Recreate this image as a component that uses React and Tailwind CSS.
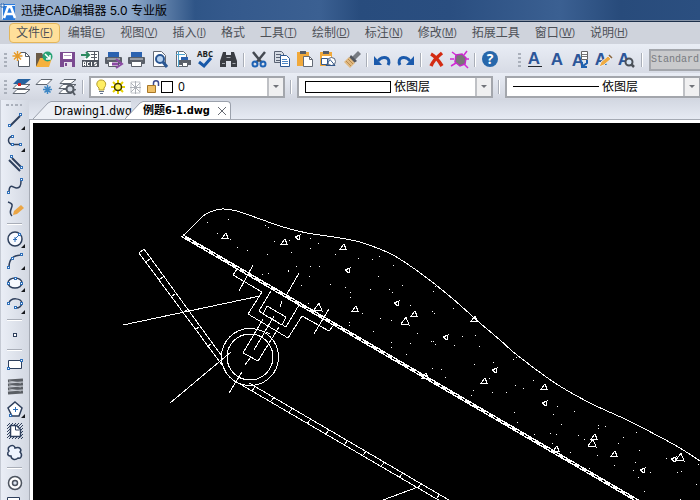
import React from "react";

const INK = "#2e3f5c";

function Icon({ children, h = 24 }) {
  return (
    <svg width="23" height={h} viewBox={`0 0 23 ${h}`} fill="none" aria-hidden="true" className="overflow-visible">
      {children}
    </svg>
  );
}

function Printer() {
  return (
    <>
      <rect x="6" y="4" width="11" height="6" fill="#2b62b0" />
      <rect x="3" y="9" width="17" height="7" rx="1" fill="#5b6069" />
      <path d="M5 11h13" stroke="#d9dce2" />
      <path d="M6.500 13.500h10v5h-10z" fill="#fff" stroke="#5b6069" />
    </>
  );
}

function LetterA({ x = 11, y = 17 }) {
  return (
    <text x={x} y={y} fontSize="17" fontWeight="700" textAnchor="middle" fill="#2c5699" fontFamily="Liberation Sans, sans-serif">A</text>
  );
}

function Layers() {
  return (
    <>
      <path d="M7 14.500h13l-5 4H3z" fill="#fff" stroke="#5f6670" />
      <path d="M7 9.500h13l-5 4H3z" fill="#fff" stroke="#5f6670" />
    </>
  );
}

const toolbarMain = [
  ["新建", <>
    <path d="M8.500 4.500h7l4 4v10h-11z" fill="#fff" stroke="#555c66" />
    <path d="M15.500 4.500v4h4" stroke="#555c66" />
    <circle cx="7.500" cy="8" r="4.500" fill="#eef1f7" />
    <path d="M7.500 3v10M2.500 8h10M4 4.500l7 7M11 4.500l-7 7" stroke="#e59a2a" strokeWidth="1.500" />
  </>],
  ["打开", <>
    <path d="M3 5h6l1 2h6v11H3z" fill="#6b5b47" />
    <path d="M7 10h12l-3 9H3z" fill="#f5b13d" />
    <circle cx="14.500" cy="8.500" r="5" fill="#27a376" />
    <path d="M12 6l4.500 4.500M17 7v4h-4" stroke="#fff" strokeWidth="1.500" />
  </>],
  ["保存", <>
    <path d="M4 4h15v15H4z" fill="#7b4a91" />
    <path d="M7 5h9v6H7z" fill="#fff" />
    <path d="M8 14h8v5H8z" fill="#e7e0ed" />
    <path d="M9 15h2v3H9z" fill="#7b4a91" />
    <path d="M8 7.500h7" stroke="#b8a0c4" />
  </>],
  ["ACIS", <>
    <path d="M8 3.500h11.500v9H5" stroke="#565c66" fill="#fff" />
    <path d="M12 6.500h6M12 9.500h6M15.500 4v8" stroke="#565c66" />
    <path d="M2 7h7M7 4l3 3-3 3" stroke="#2d8a61" strokeWidth="2" />
    <rect x="3" y="12" width="17" height="7" fill="#4f555f" />
    <path d="M4.500 18v-4h2v4M4.500 16.500h2M10.500 14.500h-2v3h2M12.500 14v4M17.500 14.500h-2v1.500h2v1.500h-2" stroke="#fff" />
  </>],
  ["输出", <>
    <Printer />
    <path d="M10 16h6" stroke="#8c4ba5" strokeWidth="3" />
    <path d="M14 11l6 5-6 4" stroke="#8c4ba5" strokeWidth="2" />
  </>],
  ["打印", <Printer />],
  ["预览", <>
    <path d="M5.500 3.500h8l4 4v11h-12z" fill="#fff" stroke="#666c76" />
    <circle cx="12" cy="11" r="4" fill="#b9d3f0" stroke="#2b5793" strokeWidth="2" />
    <path d="M15 14l4 5" stroke="#2b5793" strokeWidth="3" />
  </>],
  ["页面设置", <>
    <path d="M5.500 3.500h7l3 3v12h-10z" fill="#fff" stroke="#666c76" />
    <path d="M7.500 3v16M5 6.500h9" stroke="#4da3cf" />
    <rect x="10" y="9" width="7" height="3" fill="#2b62b0" />
    <rect x="8" y="12" width="12" height="5" fill="#5b6069" />
    <path d="M11.500 14.500h5v4h-5z" fill="#fff" stroke="#5b6069" />
  </>],
  ["拼写检查", <>
    <text x="11" y="9" fontSize="8" fontWeight="700" textAnchor="middle" fill="#1c1e22" fontFamily="Open Sans, sans-serif">ABC</text>
    <path d="M5 14l5 4 7-8" stroke="#1858a8" strokeWidth="3" />
  </>],
  ["查找", <>
    <path d="M6 4h3v3h5V4h3l3 9v6h-6v-6h-5v6H3v-6z" fill="#3a3d43" />
    <path d="M5 15.500h3M15.500 15.500h3M9.500 9.500h4" stroke="#a5a9b0" />
  </>],
  null,
  ["剪切", <>
    <path d="M5 4l9 11M17 4L8 15" stroke="#454a52" strokeWidth="2.500" />
    <circle cx="7" cy="16" r="2.500" stroke="#1e63b5" strokeWidth="2" />
    <circle cx="15" cy="16" r="2.500" stroke="#1e63b5" strokeWidth="2" />
  </>],
  ["复制", <>
    <path d="M3.500 3.500h7l2 2v9h-9z" fill="#d5dbe4" stroke="#596273" />
    <path d="M5 6.500h5M5 9.500h4M5 12.500h4" stroke="#596273" />
    <path d="M9.500 7.500h6l3 3v8h-9z" fill="#fff" stroke="#2b5793" />
    <path d="M11 11.500h5M11 13.500h6M11 15.500h6" stroke="#4c86c6" />
  </>],
  ["粘贴", <>
    <path d="M3 4h12v14H3z" fill="#f1a93b" />
    <path d="M6 3h6v3H6z" fill="#575c66" />
    <path d="M9.500 8.500h6l3 3v7h-9z" fill="#fff" stroke="#656b76" />
    <path d="M15.500 8.500v3h3" stroke="#656b76" />
  </>],
  ["粘贴为块", <>
    <path d="M3 4h12v14H3z" fill="#f1a93b" />
    <path d="M6 3h6v3H6z" fill="#575c66" />
    <path d="M5 8h9v8H5z" fill="#fff" />
    <circle cx="14.500" cy="13.500" r="4" fill="#fff" stroke="#53627b" />
    <path d="M4.500 10.500h6v6h-6zM9 17.500l4-6 5 6z" stroke="#34598c" />
  </>],
  ["格式刷", <>
    <path d="M18 3l3 3-6 6-3-3z" fill="#777b82" />
    <path d="M11 7l6 6-3 2-5-5z" fill="#53575f" />
    <path d="M9 9l6 6-5 5-6-6z" fill="#e0b981" />
    <path d="M6 13l5 5M8 11l5 5" stroke="#b98a50" />
  </>],
  null,
  ["撤销", <><path d="M17 17c4-8-6-10-10-4" stroke="#1b5aac" strokeWidth="3" /><path d="M3 8v9h8z" fill="#1b5aac" /></>],
  ["重做", <><path d="M6 17c-4-8 6-10 10-4" stroke="#1b5aac" strokeWidth="3" /><path d="M20 8v9h-8z" fill="#1b5aac" /></>],
  null,
  ["删除", <path d="M6 6c4 2 8 7 11 12M17 5C12 9 8 13 6 18" stroke="#d32b12" strokeWidth="3.500" />],
  ["清理", <>
    <path d="M8 7l6-1 4 4-1 6-5 2-5-4z" fill="#777" stroke="#c32bc8" strokeWidth="1.500" />
    <path d="M4 4l4 3M19 3l-3 4M3 18l5-3M20 20l-4-4M2 11h4M18 11h3" stroke="#d229d6" strokeWidth="1.500" />
  </>],
  null,
  ["帮助", <>
    <circle cx="11" cy="11" r="8" fill="#2767ab" />
    <text x="11" y="16" fontSize="14" fontWeight="700" textAnchor="middle" fill="#fff" fontFamily="Open Sans, sans-serif">?</text>
  </>],
];

const toolbarText = [
  ["多行文字", <><LetterA y={16} /><path d="M5 18.500h14" stroke="#22262c" /></>],
  ["单行文字", <LetterA />],
  ["文字样式", <>
    <LetterA x={9} y={18} />
    <path d="M12.500 3.500h6v8h-6z" fill="#fff" stroke="#666" /><path d="M13 6.500h5M13 8.500h5" stroke="#777" />
    <path d="M18 12v3l-4 3M13 14v5h5" stroke="#1e5fae" strokeWidth="2" />
  </>],
  ["编辑文字", <>
    <LetterA x={9} />
    <path d="M7 19l2-5 7-6 3 3-7 6z" fill="#eeab42" stroke="#e8ecf4" /><path d="M17 7l3 3" stroke="#8a653c" strokeWidth="1.500" />
  </>],
  ["查找文字", <>
    <LetterA x={9} />
    <circle cx="14" cy="14" r="3.500" fill="#d6e4f3" stroke="#4b5058" strokeWidth="2" /><path d="M16 16l3 3" stroke="#4b5058" strokeWidth="2.500" />
  </>],
];

const toolbarLayers = [
  ["图层管理", <>
    <Layers />
    <path d="M8 4h13l-6 5H3z" fill="#27629f" /><path d="M8 8h3v3H8z" fill="#d22" />
  </>],
  ["图层状态", <>
    <path d="M8 4.500h11l-5 5H3z" fill="#fff" stroke="#5f6670" />
    <path d="M14.500 10v9M10 14.500h9M11.500 11.500l6 6M17.500 11.500l-6 6" stroke="#3e87c5" strokeWidth="1.500" />
  </>],
  ["图层浏览", <>
    <Layers /><path d="M8 4.500h12l-5 4H4z" fill="#fff" stroke="#5f6670" />
    <circle cx="14" cy="14" r="3.500" fill="#d5dbe4" stroke="#555b64" strokeWidth="2" /><path d="M16 16l3 4" stroke="#555b64" strokeWidth="2" />
  </>],
];

function Grip({ x, y }) {
  return <rect x={x - 1.5} y={y - 0.5} width="2" height="2" fill="#fff" stroke="#2f6fb8" />;
}

const corner = <path d="M22 16v4h-4z" fill="#16181c" />;

const toolbarDraw = [
  ["直线", <><path d="M7 16L17 6" stroke={INK} strokeWidth="2" /><Grip x={7} y={15} /><Grip x={18} y={4} />{corner}</>],
  ["多段线", <><path d="M10 4.500C4 4 4 12 10 12.500h9" stroke={INK} strokeWidth="1.500" /><Grip x={10} y={4} /><Grip x={10} y={12} /><Grip x={18} y={12} />{corner}</>],
  ["双线", <><path d="M6 6l11 11M9 4l10 10" stroke={INK} strokeWidth="2" /><Grip x={9} y={2} /><Grip x={19} y={13} /></>],
  ["样条曲线", <><path d="M6 17c0-12 5-4 8-5 3 0 4-2 4-7" stroke={INK} strokeWidth="1.500" /><Grip x={6} y={16} /><Grip x={19} y={3} /></>],
  ["徒手画", <><path d="M5 4c10 3-2 8 4 14" stroke={INK} strokeWidth="1.500" /><path d="M10 17l1-4 7-6 3 3-7 6z" fill="#eba544" /></>],
  null,
  ["圆", <><circle cx="12" cy="11" r="7" fill="#f8faff" stroke={INK} strokeWidth="1.500" /><path d="M12 11l4-4M10 11.500h4M12 9v5" stroke="#2f6fb8" /><Grip x={17} y={6} />{corner}</>],
  ["圆弧", <><path d="M6 17C6 10 10 5 19 5" stroke={INK} strokeWidth="1.500" /><Grip x={6} y={17} /><Grip x={10} y={8} /><Grip x={19} y={4} />{corner}</>],
  ["椭圆", <><ellipse cx="12" cy="11" rx="7" ry="5" fill="#f8faff" stroke={INK} strokeWidth="1.500" /><Grip x={6} y={11} /><Grip x={19} y={11} /><Grip x={13} y={6} />{corner}</>],
  ["椭圆弧", <><path d="M6 9c2-6 12-5 13 0 0 3-3 5-6 5" stroke={INK} strokeWidth="1.500" /><Grip x={6} y={9} /><Grip x={19} y={9} /><Grip x={13} y={13} />{corner}</>],
  null,
  ["点", <rect x="10.500" y="9.500" width="3" height="3" fill="#fff" stroke={INK} />],
  null,
  ["矩形", <><path d="M5.500 6.500h13v8h-13z" fill="#fff" stroke={INK} /><Grip x={6} y={14} /><Grip x={19} y={6} /></>],
  ["螺旋", <>
    <path d="M5 5l15-1M5 9l15-1M5 13l15-1M5 17l15-1" stroke="#5a5e64" strokeWidth="3" />
    <path d="M6 5l12 2M6 9l12 2M6 13l12 2" stroke="#b4b8be" />
  </>],
  ["多边形", <><path d="M12 4l7 6-3 8H9L5 10z" fill="#fff" stroke={INK} strokeWidth="1.500" /><path d="M12.500 9v5M10 11.500h5" stroke="#2f6fb8" /><Grip x={8} y={17} />{corner}</>],
  ["图案填充", <>
    <path d="M4 6l3-3M4 9l6-6M4 12l9-9M4 15l12-12M4 18L19 3M6 19L20 5M9 19L20 8M12 19l8-8M15 19l5-5M18 19l2-2" stroke={INK} />
    <path d="M7.500 5.500h6l4 4v7h-10z" fill="#fff" stroke={INK} strokeWidth="1.500" /><path d="M12.500 6v4h4" stroke={INK} />
  </>],
  ["云线", <path d="M6 5c3-3 6-1 6 1 5-2 7 2 5 4 3 3 1 7-2 6-3 3-7 1-7-2-4 0-4-3-2-5-1-1-1-3 0-4z" fill="#eef4ff" stroke={INK} strokeWidth="1.500" />],
  null,
  ["圆环", <><circle cx="12" cy="11" r="6.500" fill="#fff" stroke="#4c535e" strokeWidth="1.500" /><circle cx="12" cy="11" r="2.500" fill="#dce4ef" stroke="#4c535e" strokeWidth="1.500" /></>],
  ["面域", <path d="M4.500 3.500h12v12h-12z" fill="#fff" stroke={INK} />],
];

function ToolRow({ items }) {
  return items.map((item, i) =>
    item ? (
      <button key={item[0]} type="button" aria-label={item[0]} className="h-6 w-[23px] shrink-0">
        <Icon>{item[1]}</Icon>
      </button>
    ) : (
      <Divider key={`d${i}`} />
    )
  );
}

function Divider() {
  return (
    <span className="flex w-2 shrink-0 justify-center">
      <span className="h-3.5 w-0.5 border-r border-white bg-[#a9aeb8]" />
    </span>
  );
}

function RowGrip() {
  return (
    <span className="flex w-[3px] shrink-0 flex-col gap-0.5" aria-hidden="true">
      <i className="h-0.5 bg-[#aab0bb]" />
      <i className="h-0.5 bg-[#aab0bb]" />
      <i className="h-0.5 bg-[#aab0bb]" />
      <i className="h-0.5 bg-[#aab0bb]" />
    </span>
  );
}

const menus = [
  ["文件", "F"], ["编辑", "E"], ["视图", "V"], ["插入", "I"], ["格式", ""], ["工具", "T"],
  ["绘制", "D"], ["标注", "N"], ["修改", "M"], ["拓展工具", ""], ["窗口", "W"], ["说明", "H"],
];

function Combo({ label, value, pad, children }) {
  return (
    <label className="relative block h-[22px] w-[196px] shrink-0 border-2 border-[#a3a6ac] bg-white">
      <select
        aria-label={label}
        className={`block h-full w-full appearance-none bg-transparent text-xs leading-[18px] text-black outline-none ${pad}`}
      >
        <option>{value}</option>
      </select>
      <span className="pointer-events-none absolute inset-y-0 left-[6px] flex items-center">{children}</span>
      <span className="pointer-events-none absolute inset-y-0 right-0 flex w-4 items-center justify-center border-l-2 border-[#bfc1c5] bg-[#f0f0f1]">
        <i className="border-x-[3px] border-t-[3px] border-x-transparent border-t-[#707379]" />
      </span>
    </label>
  );
}

// Outline of the ground surface, joined by a smooth curve.
const ground = [
  [183, 236], [202, 217], [210, 212], [222, 209], [237, 211], [260, 219], [283, 227], [307, 233], [340, 238],
  [363, 243], [393, 255], [423, 275], [453, 299], [480, 323], [500, 340], [517, 355], [555, 383], [590, 403],
  [627, 420], [660, 437], [680, 448], [700, 461], [760, 500],
];

function smooth(p) {
  let d = `M${p[0].join(" ")}`;
  for (let i = 0; i < p.length - 1; i++) {
    const a = p[i - 1] || p[i], b = p[i], c = p[i + 1], e = p[i + 2] || c;
    d += `C${b[0] + (c[0] - a[0]) / 6} ${b[1] + (c[1] - a[1]) / 6} ${c[0] - (e[0] - b[0]) / 6} ${c[1] - (e[1] - b[1]) / 6} ${c[0]} ${c[1]}`;
  }
  return d;
}

// Concrete hatch: small stones, large stones and grains.
const stones = [
  [225, 236], [284, 242], [343, 247], [355, 309], [414, 314], [474, 319], [425, 376], [484, 381], [544, 387],
  [594, 437], [556, 449], [614, 454],
];
const tilted = [[298, 237], [348, 270], [397, 303], [446, 337], [495, 370], [545, 403], [643, 470], [674, 459]];
const large = [[318, 307], [405, 321], [592, 443], [680, 457]];
const grains = [
  [207, 222], [228, 219], [217, 233], [230, 239], [237, 247], [247, 250], [265, 225], [268, 227], [274, 241], [267, 254],
  [262, 274], [268, 273], [288, 270], [289, 240], [310, 238], [318, 243], [310, 248], [291, 252], [335, 254], [358, 258],
  [372, 259], [379, 256], [393, 265], [310, 266], [319, 266], [288, 271], [309, 276], [301, 285], [330, 284], [345, 287],
  [350, 292], [350, 297], [370, 289], [378, 276], [389, 289], [392, 292], [402, 285], [410, 305], [432, 311], [434, 313],
  [433, 291], [435, 286], [453, 308], [362, 313], [380, 318], [391, 320], [349, 322], [349, 325], [373, 331], [417, 333],
  [391, 342], [391, 347], [410, 343], [431, 341], [433, 341], [435, 344], [406, 354], [454, 345], [462, 336], [475, 335],
  [479, 346], [474, 364], [493, 362], [432, 368], [441, 369], [445, 377], [473, 390], [471, 395], [492, 392], [506, 392],
  [513, 359], [516, 357], [533, 380], [515, 385], [523, 388], [489, 378], [557, 406], [553, 414], [574, 411], [514, 412],
  [517, 422], [534, 434], [550, 433], [556, 434], [561, 424], [552, 443], [570, 452], [578, 435], [584, 439], [598, 425],
  [598, 428], [605, 426], [623, 437], [618, 443], [636, 432], [639, 450], [597, 455], [614, 465], [635, 462], [633, 470],
  [638, 477], [650, 472], [666, 458], [677, 472], [681, 471], [696, 484], [644, 491], [589, 468], [680, 499], [698, 464],
  [298, 303], [308, 303], [296, 266],
];

function Drawing() {
  const beltTicks = Array.from({ length: 11 }, (_, i) => [252 + i * 18.45, 391 + i * 10.75]);
  const sideTicks = [[146, 262], [159, 280], [171, 297], [183, 313], [195, 330], [207, 347]];
  return (
    <svg className="block h-full w-full" shapeRendering="crispEdges" fill="none" stroke="#fff" role="img" aria-label="例题6-1">
      <g transform="translate(-33 -123)">
        <path d={smooth(ground)} />
        <path d="M182 235.500L808 600" strokeWidth="3.500" />
        <path d="M182 235.500L808 600" stroke="#000" strokeDasharray="4 5" strokeWidth="1" />
        <path d="M225 369L139 253l5-4 77 106" />
        <path d="M240 384l231 135M249 383l222 130" />
        {beltTicks.map(([x, y]) => <path key={x} d={`M${x} ${y}l3-4`} />)}
        {sideTicks.map(([x, y]) => <path key={x} d={`M${x} ${y}l4-3`} />)}
        <circle cx="250" cy="357" r="28.500" />
        <circle cx="250" cy="357" r="23" />
        <path d="M123 325l137-29M170 403l61-51M383 500l35-13" />
        <path d="M237 269l-4 6 29 17-14 22 40 24 14-22 27 15 4-5" />
        <path d="M271 291l-12 20 6 4M281 324l5 3 13-22" />
        <path d="M267 306l19 11-4 8-19-11z" />
        <path d="M263 319l-20 34 15 8 21-34M274 316l-20 34M269 317l7 4M266 332l4 2" />
        <path d="M299 273l-12 21M282 301l-2 6M251 357l-6 8M242 372l-13 21" />
        <path d="M253 265l-14 26M329 309l-15 25" />
        {stones.map(([x, y]) => <path key={x} d={`M${x - 3} ${y + 2}l4-5 2 5z`} />)}
        {tilted.map(([x, y]) => <path key={x} d={`M${x - 3} ${y}l5-2-1 5z`} />)}
        {large.map(([x, y]) => <path key={x} d={`M${x - 4} ${y + 3}l5-7 3 8z`} />)}
        {grains.map(([x, y], i) => <rect key={i} x={x} y={y} width="1" height="1" fill="#fff" stroke="none" />)}
      </g>
    </svg>
  );
}

export default function App() {
  return (
    <div className="flex h-screen w-full flex-col overflow-hidden bg-[#d5dae4] font-['Open_Sans','Noto_Sans_CJK_SC',sans-serif] text-xs text-black">
      <header className="flex h-[22px] shrink-0 items-center border-b border-[#1d2f4a] bg-[linear-gradient(90deg,#9db4d2_0,#8faacb_130px,#2f5587_195px,#34598c_230px,#3b6092_320px,#284c7d_360px,#2a4e80_450px,#3b6092_560px,#284b7b_620px,#2b4f80_100%)] shadow-[inset_0_-1px_0_#8794a8]">
        <svg width="17" height="20" viewBox="0 0 17 20" fill="none" aria-hidden="true">
          <path d="M3 3h12v16H3z" fill="#2779dc" />
          <path d="M4 17L8 6h3l4 11M6 13h7" stroke="#fff" strokeWidth="2.500" />
          <path d="M0 4.500h15M2.500 2v16" stroke="#e9f3ff" />
          <path d="M1 3h3v3H1z" fill="#fff" stroke="#1e5ead" />
        </svg>
        <h1 className="pl-1 font-['Inter','Noto_Sans_CJK_SC',sans-serif] text-xs leading-[20px]">迅捷CAD编辑器 5.0 专业版</h1>
      </header>

      <nav className="flex h-[22px] shrink-0 items-center gap-px bg-[#cfd3dc] pl-[9px] text-[#4d5057]">
        {menus.map(([name, key], i) => (
          <button
            key={name}
            type="button"
            className={`flex h-5 shrink-0 items-center whitespace-nowrap border px-1.5 text-xs ${
              i === 0 ? "rounded-sm border-[#e3b65c] bg-[#ffdf9a]" : "border-transparent"
            }`}
          >
            {name}
            {key && (
              <span className="font-['Liberation_Sans',sans-serif] text-[10px]">
                (<u>{key}</u>)
              </span>
            )}
          </button>
        ))}
      </nav>

      <div className="flex h-[29px] shrink-0 items-center bg-linear-to-b from-[#e9edf5] to-[#d7dbe5] pt-0.5 pl-1">
        <RowGrip />
        <div className="flex items-center pl-[3px]">
          <ToolRow items={toolbarMain} />
        </div>
        <span className="w-4 shrink-0" />
        <RowGrip />
        <div className="flex items-center pl-0.5">
          <ToolRow items={toolbarText} />
          <Divider />
        </div>
        <select
          aria-label="文字样式"
          className="ml-[3px] h-[22px] w-[120px] shrink-0 appearance-none border-2 border-[#a3a6ac] bg-[#c9cacc] font-['Liberation_Mono',monospace] text-[10px] leading-[18px] text-[#777a80] outline-none"
        >
          <option>Standard</option>
        </select>
      </div>

      <div className="flex h-[27px] shrink-0 items-center bg-linear-to-b from-[#e9edf5] to-[#d2d6e0] pl-1">
        <RowGrip />
        <div className="flex items-center pl-[3px]">
          <ToolRow items={toolbarLayers} />
          <Divider />
        </div>
        <div className="flex items-center gap-0.5 pl-0.5">
          <Combo label="图层" value="0" pad="pl-[87px]">
            <svg width="78" height="18" viewBox="0 0 78 18" fill="none" aria-hidden="true" className="-ml-1">
              <path d="M8 2c5 0 6 5 3 8v2H6v-2C2 7 4 2 8 2z" fill="#ffee62" stroke="#b39b2a" />
              <path d="M6 13.500h5M7 15.500h3" stroke="#66758c" />
              <path d="M25 2v4M25 12v4M18 9h4M28 9h4M20 4l3 3M27 11l3 3M30 4l-3 3M23 11l-3 3" stroke="#e6d200" strokeWidth="2" />
              <circle cx="25" cy="9" r="3.500" fill="#fff45c" stroke="#3b3500" strokeWidth="1.500" />
              <path d="M38 4h9v11h-9z" stroke="#c3c6cb" />
              <path d="M42.500 3v13M37 9.500h11M38 5l9 9M47 5l-9 9" stroke="#aeb2b8" />
              <path d="M60.500 9V5c0-3 5-3 5 0v3" stroke="#3d4a8c" strokeWidth="1.500" />
              <path d="M54.500 7.500h8v7h-8z" fill="#f0c168" stroke="#a87727" />
            </svg>
            <i className="-ml-2.5 h-3 w-3 border border-black bg-white" />
          </Combo>
          <Divider />
          <Combo label="颜色" value="依图层" pad="pl-[95px]">
            <i className="h-3 w-[86px] border border-black bg-white" />
          </Combo>
          <Divider />
          <Combo label="线型" value="依图层" pad="pl-[95px]">
            <i className="h-px w-[86px] bg-black" />
          </Combo>
        </div>
      </div>

      <div className="flex min-h-0 flex-1">
        <aside className="flex w-[29px] shrink-0 flex-col items-center overflow-hidden border-l border-[#c5cad4] bg-linear-to-r from-[#eaeef6] to-[#d3d8e2] pt-1 pr-0.5">
          <span className="flex h-1.5 w-4 shrink-0 gap-0.5" aria-hidden="true">
            <i className="h-0.5 flex-1 bg-[#aab0bb]" />
            <i className="h-0.5 flex-1 bg-[#aab0bb]" />
            <i className="h-0.5 flex-1 bg-[#aab0bb]" />
            <i className="h-0.5 flex-1 bg-[#aab0bb]" />
          </span>
          {toolbarDraw.map((item, i) =>
            item ? (
              <button key={item[0]} type="button" aria-label={item[0]} className="h-[22px] w-[23px] shrink-0">
                <Icon h={22}>{item[1]}</Icon>
              </button>
            ) : (
              <span key={i} className="flex h-2 shrink-0 items-center">
                <i className="h-0.5 w-[15px] border-b border-white bg-[#a9aeb8]" />
              </span>
            )
          )}
        </aside>

        <section className="flex min-w-0 flex-1 flex-col">
          <div className="flex h-[19px] shrink-0 items-end bg-linear-to-b from-[#d3d8e2] to-[#e6eaf3] pl-1 font-['DejaVu_Sans_Condensed','DejaVu_Sans','Noto_Sans_CJK_SC',sans-serif]">
            <button type="button" className="flex h-[18px] items-center whitespace-nowrap">
              <svg width="18" height="18" viewBox="0 0 18 18" fill="none" aria-hidden="true">
                <path d="M0 18L15 2l3-1.500V18z" fill="#edf0f6" />
                <path d="M0 18L15 2l3-1.500" stroke="#9ba1ac" />
              </svg>
              <span className="flex h-[18px] w-20 items-center border-t border-[#9ba1ac] bg-[#edf0f6] pl-[3px] text-xs">Drawing1.dwg</span>
            </button>
            <div className="-ml-1.5 flex h-[18px] items-center whitespace-nowrap">
              <svg width="18" height="18" viewBox="0 0 18 18" fill="none" aria-hidden="true">
                <path d="M0 18L15 2l3-1.500V18z" fill="#fff" />
                <path d="M0 18L15 2l3-1.500" stroke="#9ba1ac" />
              </svg>
              <div className="flex h-[18px] items-center gap-2 rounded-tr border-t border-r border-[#9ba1ac] bg-white pr-1">
                <button type="button" className="text-[11px] leading-4 font-bold">例题6-1.dwg</button>
                <button type="button" aria-label="关闭" className="flex h-2 w-2 items-center">
                  <svg width="8" height="8" viewBox="0 0 8 8" aria-hidden="true">
                    <path d="M0 0l8 8M8 0L0 8" stroke="#666a72" />
                  </svg>
                </button>
              </div>
            </div>
          </div>
          <main className="min-h-0 flex-1 border-t border-l border-[#a5aab4] bg-white pt-[3px] pl-[3px]">
            <div className="h-full w-full overflow-hidden bg-black">
              <Drawing />
            </div>
          </main>
        </section>
      </div>
    </div>
  );
}
